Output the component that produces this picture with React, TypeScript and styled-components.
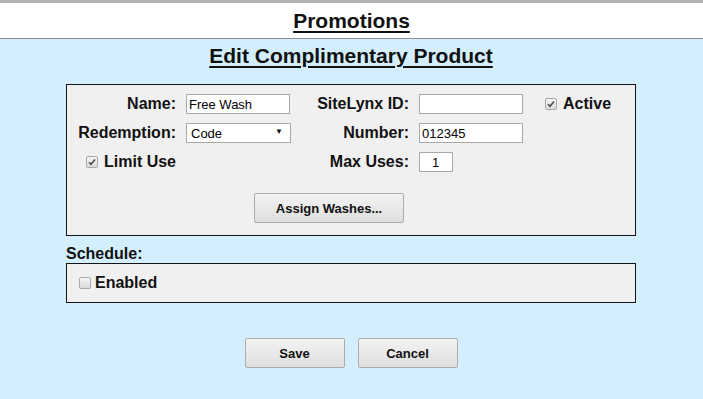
import styled, { createGlobalStyle } from "styled-components";

const GlobalStyle = createGlobalStyle`
  html, body {
    margin: 0;
    padding: 0;
    background-color: #d3effd;
    font-family: "Liberation Sans", Arial, sans-serif;
    color: #111;
  }
`;

const TopBar = styled.header`
  height: 35px;
  background-color: #fff;
  border-top: 3px solid #b2b2b2;
  border-bottom: 1px solid #8e8e8e;
  display: flex;
  align-items: center;
  justify-content: center;
`;

const PageTitle = styled.h1<{ $top?: number }>`
  margin: ${(p) => p.$top ?? 0}px 0 0;
  font-size: 21px;
  line-height: 24px;
  font-weight: bold;
  text-decoration: underline;
  text-underline-offset: 3px;
  text-align: center;
`;

const Main = styled.main`
  width: 570px;
  margin: 0 0 0 66px;
  display: flex;
  flex-direction: column;
`;

const Panel = styled.section<{ $top?: number }>`
  box-sizing: border-box;
  margin-top: ${(p) => p.$top ?? 0}px;
  border: 1px solid #151515;
  background-color: #f0f0f0;
`;

const FormGrid = styled.div`
  display: grid;
  grid-template-columns: 109px 104px 109px 104px auto;
  grid-auto-rows: 20px;
  column-gap: 10px;
  row-gap: 9px;
  align-items: center;
  padding: 9px 0 0;
`;

const Label = styled.label`
  font-size: 16px;
  font-weight: bold;
  text-align: right;
  white-space: nowrap;
`;

const TextInput = styled.input<{ $width?: number; $pad?: number }>`
  box-sizing: border-box;
  width: ${(p) => p.$width ?? 104}px;
  height: 20px;
  border: 1px solid #a9a9a9;
  background: #fff;
  padding: 0 2px 0 ${(p) => p.$pad ?? 2}px;
  font-family: "Liberation Sans", Arial, sans-serif;
  font-size: 13px;
  color: #000;
  outline: none;
`;

const SelectWrap = styled.div`
  position: relative;
  width: 105px;
  height: 20px;
`;

const Select = styled.select`
  box-sizing: border-box;
  width: 100%;
  height: 100%;
  appearance: none;
  border: 1px solid #a9a9a9;
  background: #fff;
  padding: 0 4px;
  font-family: "Liberation Sans", Arial, sans-serif;
  font-size: 13px;
  color: #000;
  outline: none;
`;

const SelectArrow = styled.span`
  position: absolute;
  right: 8px;
  top: 4px;
  font-size: 8px;
  color: #111;
  pointer-events: none;
`;

const CheckRow = styled.div<{ $indent?: number; $gap?: number }>`
  display: flex;
  align-items: center;
  gap: ${(p) => p.$gap ?? 6}px;
  margin-left: ${(p) => p.$indent ?? 0}px;
  font-size: 16px;
  font-weight: bold;
  white-space: nowrap;
`;

const Box = styled.span`
  box-sizing: border-box;
  width: 12px;
  height: 12px;
  border: 1px solid #a8a8a8;
  border-radius: 2px;
  background: linear-gradient(#f6f6f6, #dadada);
  display: inline-flex;
  align-items: center;
  justify-content: center;
`;

const Checkbox = ({ checked }: { checked?: boolean }) => (
  <Box>
    {checked && (
      <svg width="8" height="8" viewBox="0 0 8 8">
        <path d="M1 4.2 L3 6.3 L7 1.5" fill="none" stroke="#4a4a4a" strokeWidth="1.6" />
      </svg>
    )}
  </Box>
);

const Button = styled.button<{ $width?: number }>`
  box-sizing: border-box;
  width: ${(p) => p.$width ?? 100}px;
  height: 30px;
  border: 1px solid #acacac;
  border-radius: 2px;
  background: linear-gradient(#f3f3f3, #dedede);
  font-family: "Liberation Sans", Arial, sans-serif;
  font-size: 13px;
  font-weight: bold;
  color: #111;
  cursor: pointer;
`;

const AssignRow = styled.div`
  padding: 21px 0 12px 187px;
`;

const SectionLabel = styled.div`
  margin-top: 9px;
  font-size: 16px;
  font-weight: bold;
  line-height: 18px;
`;

const SchedulePanel = styled(Panel)`
  height: 40px;
  display: flex;
  align-items: center;
  padding-left: 12px;
`;

const Actions = styled.div`
  display: flex;
  justify-content: center;
  gap: 13px;
  margin-top: 35px;
`;

export default function App() {
  return (
    <>
      <GlobalStyle />
      <TopBar>
        <PageTitle>Promotions</PageTitle>
      </TopBar>
      <Main>
        <PageTitle $top={5}>Edit Complimentary Product</PageTitle>
        <Panel $top={16}>
          <FormGrid>
            <Label>Name:</Label>
            <TextInput defaultValue="Free Wash" />
            <Label>SiteLynx ID:</Label>
            <TextInput defaultValue="" />
            <CheckRow $indent={12}>
              <Checkbox checked />
              Active
            </CheckRow>

            <Label>Redemption:</Label>
            <SelectWrap>
              <Select defaultValue="Code">
                <option>Code</option>
              </Select>
              <SelectArrow>▼</SelectArrow>
            </SelectWrap>
            <Label>Number:</Label>
            <TextInput defaultValue="012345" />
            <span />

            <CheckRow $indent={19} style={{ gridColumn: "1 / 3" }}>
              <Checkbox checked />
              Limit Use
            </CheckRow>
            <Label>Max Uses:</Label>
            <TextInput $width={34} $pad={12} defaultValue="1" />
          </FormGrid>
          <AssignRow>
            <Button $width={150}>Assign Washes...</Button>
          </AssignRow>
        </Panel>
        <SectionLabel>Schedule:</SectionLabel>
        <SchedulePanel>
          <CheckRow $gap={4}>
            <Checkbox />
            Enabled
          </CheckRow>
        </SchedulePanel>
        <Actions>
          <Button>Save</Button>
          <Button>Cancel</Button>
        </Actions>
      </Main>
    </>
  );
}
